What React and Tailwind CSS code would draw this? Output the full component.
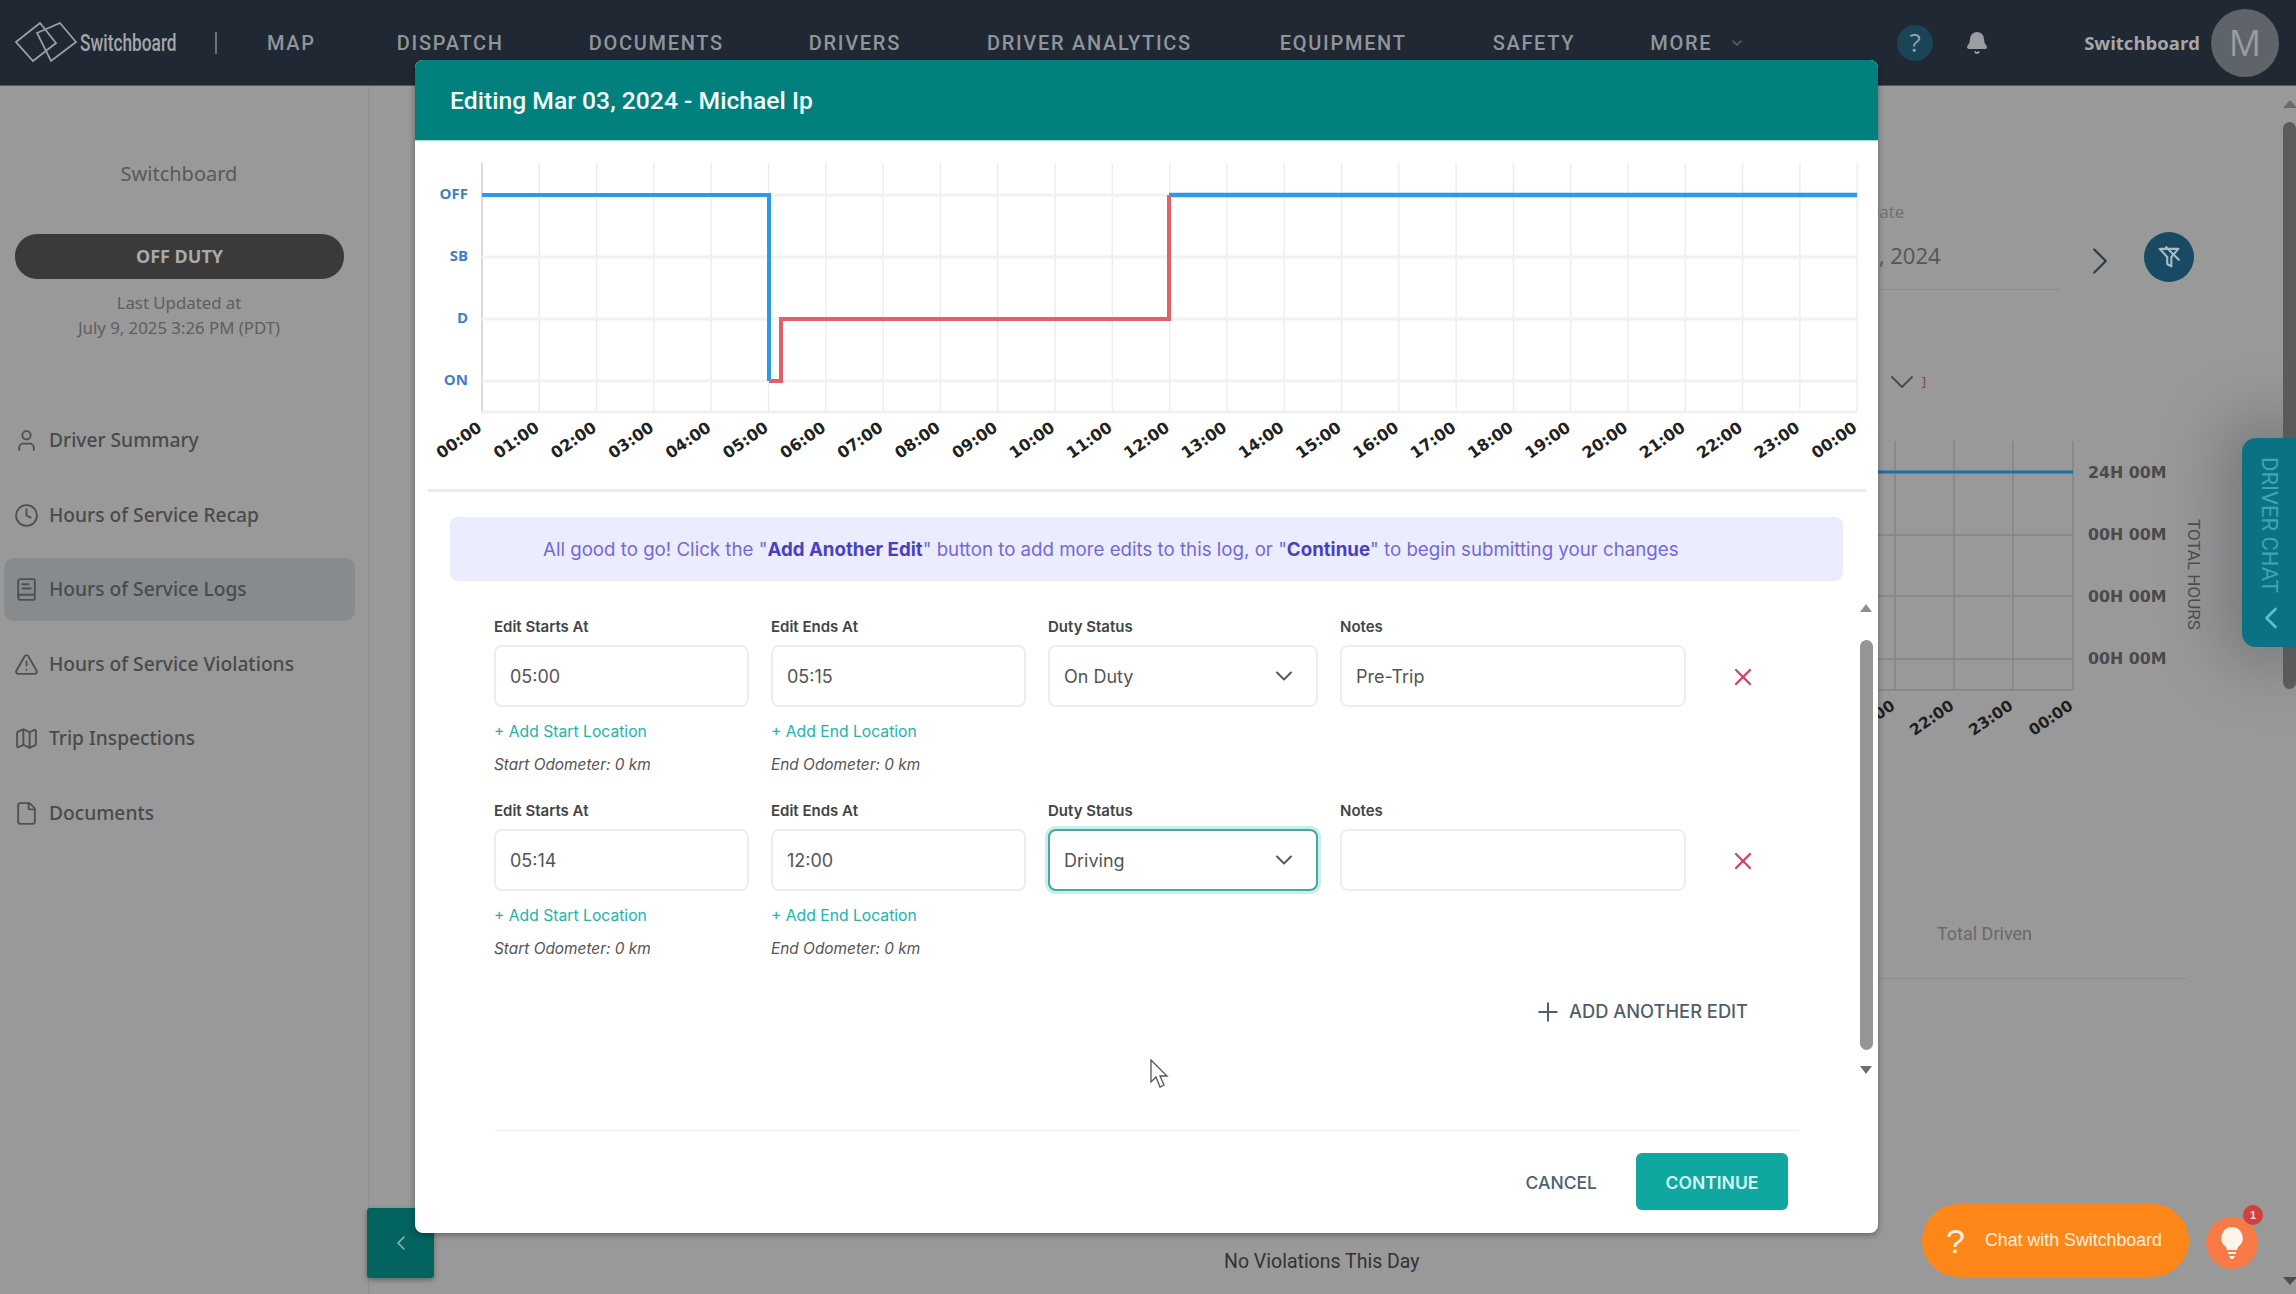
import React from 'react';
import { User, Clock, BookText, TriangleAlert, Map, File, Bell, ChevronDown, ChevronLeft, ChevronRight, Plus, X } from 'lucide-react';

const topNav = [
  { label: 'MAP', cls: 'ml-[50px]' },
  { label: 'DISPATCH', cls: 'ml-[81px]' },
  { label: 'DOCUMENTS', cls: 'ml-[85px]' },
  { label: 'DRIVERS', cls: 'ml-[85px]' },
  { label: 'DRIVER ANALYTICS', cls: 'ml-[86px]' },
  { label: 'EQUIPMENT', cls: 'ml-[88px]' },
  { label: 'SAFETY', cls: 'ml-[86px]' },
  { label: 'MORE', cls: 'ml-[75px]' },
];

const sideNav = [
  { label: 'Driver Summary', icon: User },
  { label: 'Hours of Service Recap', icon: Clock },
  { label: 'Hours of Service Logs', icon: BookText, active: true },
  { label: 'Hours of Service Violations', icon: TriangleAlert },
  { label: 'Trip Inspections', icon: Map },
  { label: 'Documents', icon: File },
];

const edits = [
  { start: '05:00', end: '05:15', status: 'On Duty', notes: 'Pre-Trip' },
  { start: '05:14', end: '12:00', status: 'Driving', notes: '', focused: true },
];

const hours = Array.from({ length: 25 }, (_, i) => i);
const hourLabel = (h) => `${String(h % 24 === 0 ? 0 : h).padStart(2, '0')}:00`;

const Logo = () => (
  <div className="flex items-center">
    <svg width="64" height="48" viewBox="0 0 64 48" fill="none" stroke="#9aa0a5" strokeWidth="1.8" className="ml-[14px]">
      <path d="M2 23 L26 4 L42 24 L19 42 Z" />
      <path d="M23 14 L46 4 L62 23 L37 42 Z" />
    </svg>
    <span className="ml-[2px] w-[100px] origin-left scale-x-[0.72] whitespace-nowrap font-['Roboto',sans-serif] text-[24px] font-medium text-[#a2a6a9]">
      Switchboard
    </span>
    <span className="ml-[35px] h-[22px] w-[2px] bg-[#6c7278]" />
  </div>
);

const TopBar = () => (
  <header className="flex h-[86px] items-center border-b border-[#55595e] bg-[#202833]">
    <Logo />
    <nav className="flex items-center font-['Roboto',sans-serif] text-[20px] font-medium tracking-[1.7px] text-[#90959a]">
      {topNav.map((item) => (
        <span key={item.label} className={item.cls}>{item.label}</span>
      ))}
      <ChevronDown className="ml-[17px] h-4 w-4 text-[#5f666d]" />
    </nav>
    <div className="ml-auto flex items-center pr-[17px]">
      <span className="flex h-9 w-9 items-center justify-center rounded-full bg-[#1b4456] font-['Open_Sans',sans-serif] text-[26px] text-[#8fa3ad]">?</span>
      <Bell className="ml-[32px] h-6 w-6 fill-[#9a9ea1] text-[#9a9ea1]" />
      <span className="ml-[95px] font-['Open_Sans',sans-serif] text-[18.5px] font-bold text-[#a5a7a9]">Switchboard</span>
      <span className="ml-[11px] flex h-[68px] w-[68px] items-center justify-center rounded-full bg-[#5f646a] font-['Open_Sans',sans-serif] text-[36px] text-[#9a9da0]">M</span>
    </div>
  </header>
);

const Sidebar = () => (
  <aside className="flex w-[369px] shrink-0 flex-col border-r border-[#8f8f8f] font-['Noto_Sans',sans-serif]">
    <div className="mt-[74px] w-[358px] text-center text-[20px] leading-[28px] text-[#585858]">Switchboard</div>
    <div className="ml-[15px] mt-[46px] flex h-[45px] w-[329px] items-center justify-center rounded-[22px] bg-[#3a3a3a] text-[18px] font-bold text-[#a9a9a9]">
      OFF DUTY
    </div>
    <div className="mt-[11px] w-[358px] text-center text-[16.8px] leading-[25px] text-[#5e5e5e]">
      <div>Last Updated at</div>
      <div>July 9, 2025 3:26 PM (PDT)</div>
    </div>
    <ul className="mt-[69px]">
      {sideNav.map((item) => {
        const Icon = item.icon;
        return (
          <li
            key={item.label}
            className={`mx-[4px] mb-[11.5px] flex h-[63px] w-[351px] items-center gap-[10px] rounded-[10px] pl-[10px] text-[19.2px] font-medium text-[#4a4a4a] ${item.active ? 'bg-[#878b8d]' : ''}`}
          >
            <Icon className="h-[25px] w-[25px] text-[#505050]" strokeWidth={1.8} />
            {item.label}
          </li>
        );
      })}
    </ul>
  </aside>
);

// chart peeking out to the right of the modal
const BackChart = () => (
  <svg width="414" height="330" viewBox="1800 440 414 330" className="block font-['DejaVu_Sans',sans-serif]">
    {[1895, 1954, 2013, 2073].map((x) => (
      <line key={x} x1={x} x2={x} y1="441" y2="690" stroke="#858585" strokeWidth="1.5" />
    ))}
    {[535, 596, 659, 690].map((y) => (
      <line key={y} x1="1800" x2="2073" y1={y} y2={y} stroke="#858585" strokeWidth="1.5" />
    ))}
    <line x1="1800" x2="2073" y1="472" y2="472" stroke="#1d6fa8" strokeWidth="3" />
    {['24H 00M', '00H 00M', '00H 00M', '00H 00M'].map((t, i) => (
      <text key={i} x="2088" y={[478, 540, 602, 664][i]} className="fill-[#4a4a4a] text-[15.8px] font-bold">{t}</text>
    ))}
    {[['21:00', 1895], ['22:00', 1954], ['23:00', 2013], ['00:00', 2073]].map(([t, x]) => (
      <text key={x} transform={`translate(${x + 1} 708) rotate(-35)`} textAnchor="end" className="fill-[#1e1e1e] text-[15.5px] font-bold">{t}</text>
    ))}
    <text transform="translate(2188 519) rotate(90)" className="fill-[#4c4c4c] font-['Roboto',sans-serif] text-[17px]">TOTAL HOURS</text>
  </svg>
);

const Background = () => (
  <main className="flex min-w-0 flex-1 flex-col font-['Open_Sans',sans-serif]">
    <div className="mt-[114px] flex items-start justify-end pr-[89px]">
      <div className="h-[90px] w-[233px] border-b border-[#8a8a8a]">
        <div className="pl-[40px] text-[17px] leading-[24px] text-[#6e6e6e]">Date</div>
        <div className="-ml-[20px] mt-[16px] text-[22px] leading-[30px] text-[#555]">Mar 03, 2024</div>
      </div>
      <ChevronRight className="ml-[17px] mt-[38px] h-[46px] w-[46px] text-[#2c3e4a]" strokeWidth={1.2} />
      <div className="ml-[21px] mt-[32px] flex h-[50px] w-[50px] items-center justify-center rounded-full bg-[#184a63]">
        <svg width="28" height="28" viewBox="0 0 24 24" fill="none" stroke="#a8bcc6" strokeWidth="1.8" strokeLinejoin="round">
          <path d="M4 5 H20 L14 12 V20 L10.5 18 V12 Z" />
          <path d="M9 3 L21 15" />
        </svg>
      </div>
    </div>
    <div className="mt-[72px] flex items-center justify-end pr-[357px]">
      <ChevronDown className="h-[40px] w-[40px] text-[#4a4a4a]" strokeWidth={1.1} />
      <span className="text-[13px] text-[#7a3d45]">]</span>
    </div>
    <div className="mt-[38px] flex justify-end pr-[69px]">
      <BackChart />
    </div>
    <div className="mt-[150px] flex justify-end pr-[251px] font-['Roboto',sans-serif] text-[18px] text-[#696969]">Total Driven</div>
    <div className="ml-auto mr-[96px] mt-[31px] h-px w-[400px] bg-[#8d8d8d]" />
    <div className="mt-[268px] pl-[855px] font-['Roboto',sans-serif] text-[19.5px] text-[#333]">No Violations This Day</div>
  </main>
);

const PageScrollbar = () => (
  <div className="relative flex w-[13px] shrink-0 flex-col items-center">
    <span className="mt-[14px] h-0 w-0 border-x-[7px] border-b-[8px] border-x-transparent border-b-[#6a6a6a]" />
    <span className="mt-[14px] h-[567px] w-[13px] rounded-full bg-[#5c5c5c]" />
    <span className="mb-[9px] mt-auto h-0 w-0 border-x-[7px] border-t-[8px] border-x-transparent border-t-[#4f4f4f]" />
  </div>
);

const DutyChart = () => (
  <svg width="1463" height="348" viewBox="415 141 1463 348" className="block font-['DejaVu_Sans',sans-serif]">
    {hours.map((h) => {
      const x = 482 + h * 57.3;
      return <line key={h} x1={x} x2={x} y1="163" y2="412" stroke={h === 0 ? '#c6c6c6' : '#ebebeb'} strokeWidth="1.3" />;
    })}
    {[195, 257, 319, 381, 412].map((y) => (
      <line key={y} x1="482" x2="1857" y1={y} y2={y} stroke="#f1f1f1" strokeWidth="3" />
    ))}
    {[['OFF', 194], ['SB', 256], ['D', 318], ['ON', 380]].map(([t, y]) => (
      <text key={t} x="468" y={y + 5} textAnchor="end" className="fill-[#3f7fc2] font-['Open_Sans',sans-serif] text-[15px] font-bold">{t}</text>
    ))}
    <path d="M482 195 H769 V381" fill="none" stroke="#2b9be6" strokeWidth="4" />
    <path d="M1169 195 H1857" fill="none" stroke="#2b9be6" strokeWidth="4.5" />
    <path d="M769 381 H781 V319 H1169 V195" fill="none" stroke="#e0616c" strokeWidth="4" />
    {hours.map((h) => (
      <text
        key={h}
        transform={`translate(${483 + h * 57.3} 430) rotate(-35)`}
        textAnchor="end"
        className="fill-[#222] text-[16px] font-bold"
      >
        {hourLabel(h)}
      </text>
    ))}
  </svg>
);

const Field = ({ children, focused }) => (
  <div
    className={`flex h-[62px] items-center justify-between rounded-[8px] bg-white pl-[14px] pr-[14px] text-[18px] text-[#555] ${
      focused
        ? 'border-2 border-[#4aa6a0] shadow-[0_0_0_3px_rgba(130,220,210,0.45)]'
        : 'border-2 border-[#eceef1]'
    }`}
  >
    {children}
  </div>
);

const EditRow = ({ edit }) => (
  <div className="grid grid-cols-[255px_255px_270px_346px_auto] gap-x-[22px]">
    {['Edit Starts At', 'Edit Ends At', 'Duty Status', 'Notes'].map((l) => (
      <div key={l} className="text-[15px] font-semibold leading-[20px] text-[#444]">{l}</div>
    ))}
    <div />
    <div className="col-span-5 mt-[8px] grid grid-cols-[255px_255px_270px_346px_auto] items-center gap-x-[22px]">
      <Field>{edit.start}</Field>
      <Field>{edit.end}</Field>
      <Field focused={edit.focused}>
        {edit.status}
        <ChevronDown className="mr-[4px] h-[28px] w-[28px] text-[#555]" strokeWidth={1.6} />
      </Field>
      <Field>{edit.notes}</Field>
      <X className="ml-[21px] mt-[1px] h-[28px] w-[28px] text-[#d9435e]" strokeWidth={2} />
    </div>
    <div className="mt-[15px] text-[15.7px] leading-[20px] text-[#22b3aa]">+ Add Start Location</div>
    <div className="mt-[15px] text-[15.7px] leading-[20px] text-[#22b3aa]">+ Add End Location</div>
    <div className="col-span-3" />
    <div className="mt-[13px] text-[15.4px] italic leading-[20px] text-[#555]">Start Odometer: 0 km</div>
    <div className="mt-[13px] text-[15.4px] italic leading-[20px] text-[#555]">End Odometer: 0 km</div>
  </div>
);

const EditModal = () => (
  <div className="absolute left-[415px] top-[60px] z-20 flex h-[1173px] w-[1463px] flex-col overflow-hidden rounded-[8px] bg-white font-['Inter',sans-serif] shadow-[0_2px_6px_rgba(0,0,0,0.35)]">
    <div className="flex h-[81px] shrink-0 items-center border-b border-[#9fdcdc] bg-[#01807d] pl-[35px] pt-[2px] font-['Roboto',sans-serif] text-[24.7px] font-medium text-[#f2fbfa]">
      Editing Mar 03, 2024 - Michael Ip
    </div>
    <DutyChart />
    <div className="mx-[13px] h-[3px] w-[1438px] shrink-0 bg-[#ececec]" />
    <div className="ml-[35px] mt-[25px] flex h-[64px] w-[1393px] shrink-0 items-center rounded-[8px] bg-[#ececff] pl-[93px] pt-[2px] text-[18.7px] text-[#7468dc]">
      <span className="whitespace-nowrap">
        All good to go! Click the "<b className="font-bold text-[#4a3fc4]">Add Another Edit</b>" button to add more edits to this log, or "<b className="font-bold text-[#4a3fc4]">Continue</b>" to begin submitting your changes
      </span>
    </div>
    <div className="flex h-[549px] shrink-0">
      <div className="flex w-[1444px] flex-col pl-[79px] pt-[36px]">
        <div className="flex flex-col gap-[26px]">
          {edits.map((e, i) => <EditRow key={i} edit={e} />)}
        </div>
        <div className="mt-[38px] flex h-[30px] items-center justify-end pr-[111px] text-[18.3px] font-medium text-[#4f5f6a]">
          <Plus className="mr-[6px] h-[30px] w-[30px] text-[#4f5f6a]" strokeWidth={1.6} />
          ADD ANOTHER EDIT
        </div>
      </div>
      <div className="flex w-[14px] flex-col items-center pt-[23px]">
        <span className="h-0 w-0 border-x-[6px] border-b-[8px] border-x-transparent border-b-[#8f8f8f]" />
        <span className="mt-[28px] h-[410px] w-[13px] rounded-full bg-[#959595]" />
        <span className="mt-[16px] h-0 w-0 border-x-[6px] border-t-[8px] border-x-transparent border-t-[#6f6f6f]" />
      </div>
    </div>
    <div className="ml-[79px] h-px w-[1304px] shrink-0 bg-[#eeeeee]" />
    <div className="flex items-center justify-end pr-[90px] pt-[22px] text-[17.5px] font-medium">
      <span className="mr-[39px] pt-[4px] text-[#4d6170]">CANCEL</span>
      <span className="flex h-[57px] w-[152px] items-center justify-center rounded-[6px] bg-[#0ea8a0] pt-[4px] font-semibold text-[#d9f6f3]">CONTINUE</span>
    </div>
    <svg width="20" height="30" viewBox="0 0 20 30" fill="white" stroke="#555" strokeWidth="1.3" className="absolute left-[735px] top-[999px]">
      <path d="M1 1 V23 L6 18 L10 28 L14 26 L10 17 H17 Z" />
    </svg>
  </div>
);

const SidePull = () => (
  <div className="absolute left-[367px] top-[1208px] z-10 flex h-[70px] w-[67px] items-center justify-center rounded-[3px] bg-[#03635f] shadow-[0_2px_5px_rgba(0,0,0,0.35)]">
    <ChevronLeft className="h-6 w-6 text-[#8fb8b5]" strokeWidth={1.6} />
  </div>
);

const DriverChat = () => (
  <div className="absolute right-0 top-[438px] z-10 flex h-[209px] w-[54px] flex-col items-center rounded-l-[14px] bg-[#0b7283] pt-[19px] font-['Roboto',sans-serif] shadow-[0_0_60px_20px_rgba(85,85,95,0.45)]">
    <span className="text-[22px] leading-[24px] text-[#3aa7b3] [writing-mode:vertical-rl]">DRIVER CHAT</span>
    <ChevronLeft className="ml-[4px] mt-[7px] h-9 w-9 text-[#5cc0cb]" strokeWidth={1.8} />
  </div>
);

const ChatWidget = () => (
  <div className="absolute left-[1922px] top-[1204px] z-30 flex items-start font-['Liberation_Sans',sans-serif]">
    <div className="flex h-[73px] w-[267px] items-center rounded-full bg-[#ff8719] pl-[24px] text-[17.8px] font-medium text-[#fff0dd]">
      <span className="w-[39px] text-[34px] font-normal leading-none">?</span>
      Chat with Switchboard
    </div>
    <div className="relative ml-[17px] mt-[13px] flex h-[52px] w-[52px] items-center justify-center rounded-full bg-[#f77a47]">
      <svg width="24" height="34" viewBox="0 0 24 34" fill="#fff3ea">
        <path d="M12 1 a11 11 0 0 1 6 20 l-1 3 H7 l-1 -3 A11 11 0 0 1 12 1 Z" />
        <path d="M8 26 h8 v2 h-8 Z M9 30 h6 l-2 3 h-2 Z" />
      </svg>
      <span className="absolute -right-[5px] -top-[12px] flex h-[20px] w-[20px] items-center justify-center rounded-full bg-[#d23f3f] text-[11px] font-bold text-[#ffdcdc]">1</span>
    </div>
  </div>
);

const App = () => (
  <div className="relative h-[1294px] w-[2296px] overflow-hidden bg-[#999999]">
    <TopBar />
    <div className="flex h-[1208px]">
      <Sidebar />
      <Background />
      <PageScrollbar />
    </div>
    <SidePull />
    <DriverChat />
    <EditModal />
    <ChatWidget />
  </div>
);

export default App;
